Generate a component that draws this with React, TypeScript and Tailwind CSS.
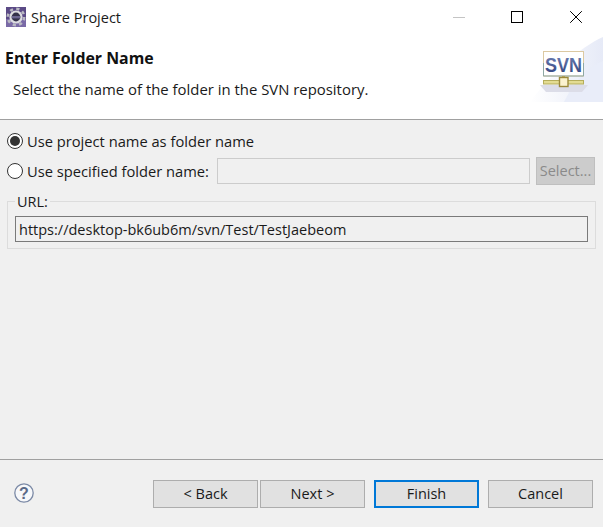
const font = { fontFamily: '"Open Sans", "Noto Sans", sans-serif' };

function AppIcon() {
    return (
        <svg width="20" height="20" viewBox="0 0 20 20" className="shrink-0">
            <rect x="0" y="0" width="20" height="20" fill="#5b4a86" />
            <rect x="0" y="12" width="20" height="8" fill="#7a6aa6" />
            <circle cx="10" cy="10" r="8.2" fill="none" stroke="#b9b9c2" strokeWidth="2.6" strokeDasharray="3.2 3.24" />
            <circle cx="10" cy="10" r="6.6" fill="#dcdce0" />
            <circle cx="10" cy="10" r="4.4" fill="#34314a" />
            <rect x="5.8" y="9" width="8.4" height="2.4" fill="#6a6590" />
        </svg>
    );
}

function SvnBanner() {
    return (
        <svg width="73" height="67" viewBox="0 0 73 67" className="shrink-0">
            <defs>
                <linearGradient id="fade" x1="0" y1="0" x2="1" y2="0">
                    <stop offset="0" stopColor="#ffffff" />
                    <stop offset="1" stopColor="#e6eaf7" />
                </linearGradient>
                <linearGradient id="letters" x1="0" y1="0" x2="0" y2="1">
                    <stop offset="0" stopColor="#7484b6" />
                    <stop offset="1" stopColor="#2b3f7c" />
                </linearGradient>
            </defs>
            <path d="M0 67 C20 40 50 12 73 2 V67 Z" fill="url(#fade)" />
            <path d="M34 67 C44 46 58 32 73 26 V67 Z" fill="#e9edf9" />
            <rect x="13.5" y="16.5" width="40" height="24.5" fill="#ffffff" stroke="#dcc9a2" />
            <path d="M13.5 28 V41 H53.5 V28" fill="none" stroke="#8fa8a4" />
            <text x="33.5" y="37" textAnchor="middle" textLength="37" lengthAdjust="spacingAndGlyphs" fontFamily='"Liberation Sans", sans-serif' fontWeight="700" fontSize="21" fill="url(#letters)">SVN</text>
            <path d="M10 50 L58 50 L52 57 L16 57 Z" fill="#dcdde8" />
            <rect x="32" y="41" width="3" height="2" fill="#b5a860" />
            <rect x="13.5" y="45.5" width="40" height="3.5" fill="#e3dc92" stroke="#b5ad5a" strokeWidth="1" />
            <rect x="29.5" y="42.5" width="8.5" height="9" fill="#fbf2cf" stroke="#9c8a3c" strokeWidth="1.4" />
        </svg>
    );
}

function Radio({ checked, label }: { checked?: boolean; label: string }) {
    return (
        <label className="flex items-center">
            <span className="flex h-4 w-4 shrink-0 items-center justify-center rounded-full border border-[#333333] bg-white">
                {checked && <span className="h-2.5 w-2.5 rounded-full bg-[#333333]" />}
            </span>
            <span className="ml-[4px] whitespace-nowrap text-[14.7px]">{label}</span>
        </label>
    );
}

function FooterButton({ label, primary }: { label: string; primary?: boolean }) {
    return (
        <button
            className={`h-7 w-[105px] bg-[#e1e1e1] text-[#1a1a1a] ${primary ? 'border-2 border-[#0078d7]' : 'border border-[#adadad]'}`}
        >
            {label}
        </button>
    );
}

export default function App() {
    return (
        <div style={font} className="flex h-[527px] w-[603px] flex-col overflow-hidden bg-white text-[14.5px] leading-5 text-[#1a1a1a]">
            {/* title bar */}
            <div className="flex h-[35px] shrink-0 items-center pb-[1px] pl-[6px]">
                <AppIcon />
                <span className="ml-[5px] flex-1 pt-[2px] text-[#1a1a1a]">Share Project</span>
                <div className="-mr-px flex items-center">
                    <div className="flex w-[58px] justify-center">
                        <div className="h-px w-[12px] bg-[#c4c4c4]" />
                    </div>
                    <div className="flex w-[58px] justify-center">
                        <div className="h-3 w-3 border border-black" />
                    </div>
                    <div className="flex w-[58px] justify-center pl-[2px]">
                        <svg width="12" height="12" viewBox="0 0 12 12">
                            <path d="M0.2 0.2 L11.8 11.8 M11.8 0.2 L0.2 11.8" stroke="#000" strokeWidth="1" />
                        </svg>
                    </div>
                </div>
            </div>

            {/* banner */}
            <div className="flex h-[85px] shrink-0 items-start border-b border-[#a0a0a0]">
                <div className="flex-1 pl-[5px]">
                    <div className="mt-[13px] text-[15.9px] font-bold text-[#111111]">Enter Folder Name</div>
                    <div className="ml-[8px] mt-[11px] text-[14.9px]">Select the name of the folder in the SVN repository.</div>
                </div>
                <SvnBanner />
            </div>

            {/* body */}
            <div className="flex flex-1 flex-col border-b border-[#a0a0a0] bg-[#f0f0f0] pl-[7px] pr-[8px] pt-[11px]">
                <Radio checked label="Use project name as folder name" />
                <div className="mt-[6px] flex items-center">
                    <Radio label="Use specified folder name:" />
                    <div className="ml-[8px] h-[26px] flex-1 border border-[#cccccc] bg-[#f0f0f0]" />
                    <button className="ml-[6px] h-7 w-[59px] border border-[#bfbfbf] bg-[#cccccc] text-[#8a8a8a]">Select...</button>
                </div>
                <fieldset className="mt-[9px] w-[589px] border border-[#dcdcdc] pb-[6px] pl-[7px] pr-[7px] pt-[7px]">
                    <legend className="px-[2px] leading-[15px]">URL:</legend>
                    <div className="flex h-[26px] items-center border border-[#7a7a7a] pl-[3px] pt-[2px]">
                        https://desktop-bk6ub6m/svn/Test/TestJaebeom
                    </div>
                </fieldset>
            </div>

            {/* footer */}
            <div className="flex h-[67px] shrink-0 items-start bg-[#f0f0f0] pl-[14px] pr-[10px] pt-[20px]">
                <svg width="20" height="20" viewBox="0 0 20 20" className="mt-[3px] shrink-0">
                    <circle cx="10" cy="10" r="9.2" fill="#f7f8fa" stroke="#7c8aa6" strokeWidth="1.3" />
                    <text x="10" y="15.5" textAnchor="middle" fontFamily='"Liberation Sans", sans-serif' fontWeight="700" fontSize="16" fill="#5b6a88">?</text>
                </svg>
                <div className="ml-auto flex">
                    <FooterButton label="< Back" />
                    <div className="ml-[2px]">
                        <FooterButton label="Next >" />
                    </div>
                    <div className="ml-[9px]">
                        <FooterButton label="Finish" primary />
                    </div>
                    <div className="ml-[9px]">
                        <FooterButton label="Cancel" />
                    </div>
                </div>
            </div>
        </div>
    );
}
